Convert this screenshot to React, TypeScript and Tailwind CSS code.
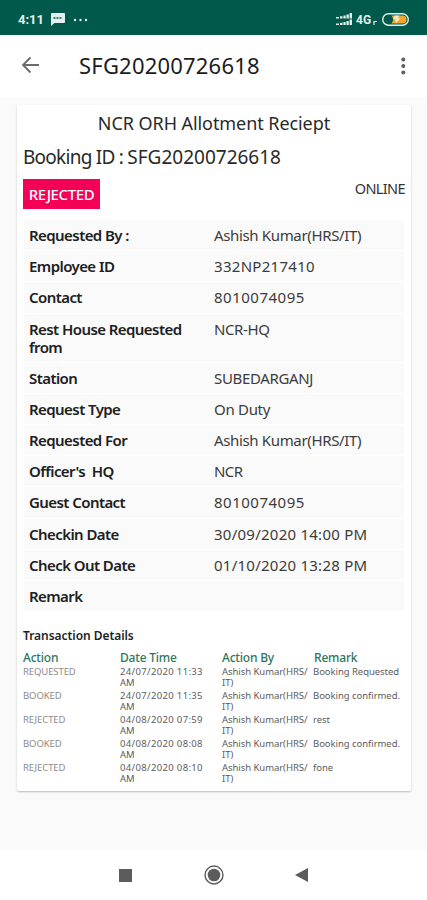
interface Detail {
  label: string;
  value: string;
  valueStyle: string;
}

interface Transaction {
  action: string;
  date: string;
  remark: string;
}

const details: Detail[] = [
  { label: "Requested By :", value: "Ashish Kumar(HRS/IT)", valueStyle: "tracking-[-0.35px]" },
  { label: "Employee ID", value: "332NP217410", valueStyle: "tracking-[0.3px]" },
  { label: "Contact", value: "8010074095", valueStyle: "tracking-[0.5px]" },
  { label: "Rest House Requested from", value: "NCR-HQ", valueStyle: "tracking-[-0.4px]" },
  { label: "Station", value: "SUBEDARGANJ", valueStyle: "tracking-[-0.35px]" },
  { label: "Request Type", value: "On Duty", valueStyle: "tracking-[-0.3px]" },
  { label: "Requested For", value: "Ashish Kumar(HRS/IT)", valueStyle: "tracking-[-0.35px]" },
  { label: "Officer's  HQ", value: "NCR", valueStyle: "tracking-[-0.6px]" },
  { label: "Guest Contact", value: "8010074095", valueStyle: "tracking-[0.5px]" },
  { label: "Checkin Date", value: "30/09/2020 14:00 PM", valueStyle: "tracking-[0.25px]" },
  { label: "Check Out Date", value: "01/10/2020 13:28 PM", valueStyle: "tracking-[0.25px]" },
  { label: "Remark", value: "", valueStyle: "" },
];

const transactions: Transaction[] = [
  { action: "REQUESTED", date: "24/07/2020 11:33", remark: "Booking Requested" },
  { action: "BOOKED", date: "24/07/2020 11:35", remark: "Booking confirmed." },
  { action: "REJECTED", date: "04/08/2020 07:59", remark: "rest" },
  { action: "BOOKED", date: "04/08/2020 08:08", remark: "Booking confirmed." },
  { action: "REJECTED", date: "04/08/2020 08:10", remark: "fone" },
];

const StatusBar = () => (
  <div className="h-[35px] shrink-0 bg-[#00594b] flex items-center justify-between px-[18px] pt-1 text-[#e3f0ec]">
    <div className="flex items-center">
      <span className="w-[26px] font-['Roboto'] text-[13px] leading-4 font-bold">4:11</span>
      <svg width="14" height="13" viewBox="0 0 14 13" className="ml-[7px]">
        <path d="M1 0h12a1 1 0 0 1 1 1v8a1 1 0 0 1-1 1H3.5L0 13V1a1 1 0 0 1 1-1z" fill="#e3f0ec" />
        <path d="M2.5 5h9" stroke="#00594b" strokeWidth="1.4" strokeDasharray="2 1" />
      </svg>
      <svg width="16" height="4" viewBox="0 0 16 4" className="ml-[8px]" fill="#e3f0ec">
        <circle cx="2" cy="2" r="1.2" />
        <circle cx="7.5" cy="2" r="1.2" />
        <circle cx="13" cy="2" r="1.2" />
      </svg>
    </div>
    <div className="flex items-center">
      <svg width="17" height="13" viewBox="0 0 17 13" fill="#e3f0ec">
        <path d="M0 4h3v1.5H0zM4 3.2h2.5v2.3H4zM7.4 2.4h2.3v3.1H7.4zM10.5 1.4h2.3v4.1h-2.3zM13.6 0H16v5.5h-2.4z" />
        <path d="M0 10.5h3V12H0zM4 9.7h2.5V12H4zM7.4 8.9h2.3V12H7.4zM10.5 7.9h2.3V12h-2.3zM13.6 6.5H16V12h-2.4z" />
      </svg>
      <span className="ml-[3px] w-[17px] font-['Roboto'] text-[12px] leading-4 font-bold">4G</span>
      <svg width="5" height="5" viewBox="0 0 5 5" className="mt-1.5 mr-[4px]">
        <path d="M1 5V1.5h3" stroke="#e3f0ec" strokeWidth="1.2" fill="none" />
      </svg>
      <svg width="27" height="13" viewBox="0 0 27 13">
        <rect x="0.7" y="0.7" width="25.6" height="11.6" rx="5.8" fill="none" stroke="#e3f0ec" strokeWidth="1.4" />
        <path d="M9.5 2.5H20.5a4 4 0 0 1 0 8H9.5l2-4z" fill="#f2a52c" />
        <path d="M12.5 2.5h5l-1.5 3h2.5l-5 5v-4H11z" fill="#f7e5b8" />
      </svg>
    </div>
  </div>
);

const AppBar = () => (
  <div className="h-[62px] shrink-0 bg-white flex items-center px-[21px]">
    <svg width="19" height="18" viewBox="0 0 19 18" fill="none" stroke="#6b6b6b" strokeWidth="1.8" className="-mt-[2px]">
      <path d="M18 9H2M9.5 1.5 2 9l7.5 7.5" />
    </svg>
    <div className="ml-[39px] -mt-[2px] flex-1 text-[22px] leading-7 tracking-[0.2px] text-[#1c1c1c]">
      SFG20200726618
    </div>
    <svg width="6" height="18" viewBox="0 0 6 18" fill="#5f5f5f" className="-mt-px">
      <circle cx="3.3" cy="2.5" r="2" />
      <circle cx="3.3" cy="9" r="2" />
      <circle cx="3.3" cy="15.5" r="2" />
    </svg>
  </div>
);

const DetailTable = () => (
  <div className="mx-[1px] mt-[11px]">
    {details.map((item) => (
      <div
        key={item.label}
        className="flex min-h-[31.2px] border-b border-white bg-[#fafafa] pl-[5px] pt-[6px] pb-[6px] text-[15px] leading-[18px]"
      >
        <div className="w-[185px] shrink-0 pr-5 font-semibold tracking-[-0.57px] text-[#202020] whitespace-pre-wrap">
          {item.label}
        </div>
        <div className="text-[#3c3c3c] whitespace-nowrap">
          <span className={item.valueStyle}>{item.value}</span>
        </div>
      </div>
    ))}
  </div>
);

const TransactionTable = () => (
  <div className="mt-[16px]">
    <div className="text-[12px] leading-4 font-semibold tracking-[-0.05px] text-[#1f1f1f]">Transaction Details</div>
    <div className="mt-[7px] flex text-[12px] leading-[14px] font-medium tracking-[-0.2px] text-[#2f7660]">
      <div className="w-[97px]">Action</div>
      <div className="w-[102px]">Date Time</div>
      <div className="w-[92px]">Action By</div>
      <div>Remark</div>
    </div>
    <div className="mt-[1px]">
      {transactions.map((item) => (
        <div key={item.date} className="flex h-6 text-[9.5px] leading-[11.3px] text-[#5c5c5c] whitespace-nowrap">
          <div className="w-[97px] tracking-[-0.1px] text-[#8b8b8b]">{item.action}</div>
          <div className="w-[102px]">
            <span className="tracking-[0.35px]">{item.date}</span>
            <br />
            AM
          </div>
          <div className="w-[91px] tracking-[-0.05px]">
            Ashish Kumar(HRS/
            <br />
            IT)
          </div>
          <div className="tracking-[-0.05px]">{item.remark}</div>
        </div>
      ))}
    </div>
  </div>
);

const NavBar = () => (
  <div className="h-[50px] shrink-0 bg-white flex items-center pl-[119px]">
    <div className="h-[13px] w-[13px] bg-[#5c5c5c]"></div>
    <svg width="20" height="20" viewBox="0 0 20 20" className="ml-[72px]">
      <circle cx="10" cy="10" r="9" fill="none" stroke="#5c5c5c" strokeWidth="1.4" />
      <circle cx="10" cy="10" r="6.3" fill="#5c5c5c" />
    </svg>
    <svg width="13" height="14" viewBox="0 0 13 14" className="ml-[71px]">
      <path d="M13 0v14L0 7z" fill="#5c5c5c" />
    </svg>
  </div>
);

export default function App() {
  return (
    <div className="flex h-[900px] w-[427px] flex-col overflow-hidden bg-[#fafafa] font-['Noto_Sans',sans-serif]">
      <StatusBar />
      <AppBar />
      <div className="flex-1 pl-[17px] pr-4 pt-2">
        <div className="h-[686px] rounded-[2px] bg-white px-[6px] shadow-[0_1px_2px_rgba(0,0,0,0.25)]">
          <div className="pt-[6px] text-center text-[18px] leading-6 tracking-[-0.07px] text-[#292929]">
            NCR ORH Allotment Reciept
          </div>
          <div className="mt-[9px] text-[19px] leading-[26px] text-[#292929]">
            <span className="tracking-[-0.75px]">Booking ID : </span>SFG20200726618
          </div>
          <div className="mt-[9px] flex justify-between">
            <div className="flex h-[30px] w-[77px] items-center justify-center bg-[#f50057] text-[15px] font-medium tracking-[-0.4px] text-white">
              REJECTED
            </div>
            <div className="text-[14.5px] leading-[18px] tracking-[-0.6px] text-[#333333]">ONLINE</div>
          </div>
          <DetailTable />
          <TransactionTable />
        </div>
      </div>
      <NavBar />
    </div>
  );
}
